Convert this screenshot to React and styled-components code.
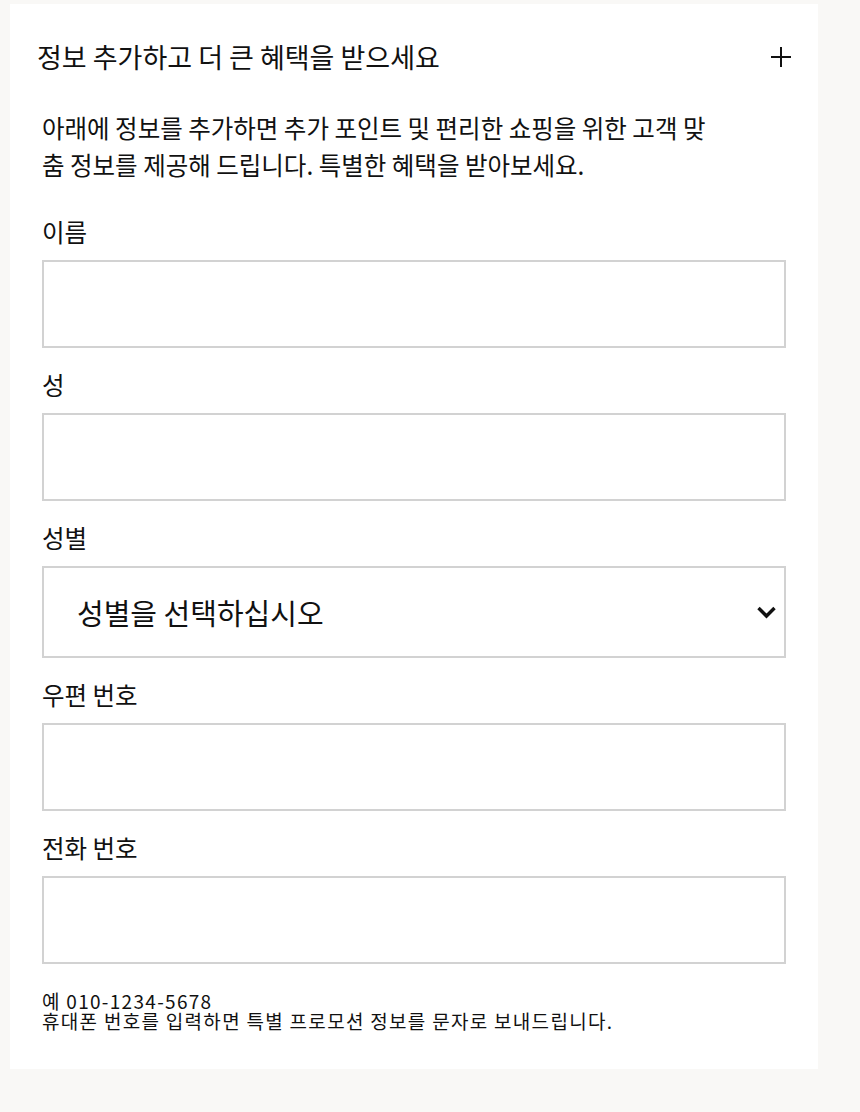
import React from "react";
import styled, { createGlobalStyle } from "styled-components";

const Global = createGlobalStyle`
  html, body { margin: 0; padding: 0; background: #f9f8f6; }
  body { font-family: "Noto Sans CJK KR", "Noto Sans", sans-serif; color: #111; }
  * { box-sizing: border-box; }
`;

const Page = styled.div`
  padding: 4px 42px 44px 10px;
`;

const Panel = styled.section`
  background: #fff;
  width: 808px;
  padding-bottom: 38px;
`;

const Header = styled.button`
  display: flex;
  align-items: center;
  justify-content: space-between;
  width: 100%;
  border: 0;
  background: transparent;
  padding: 38px 26px 0 27px;
  font: inherit;
  color: inherit;
  cursor: pointer;
  text-align: left;
`;

const Title = styled.span`
  font-size: 27px;
  line-height: 30px;
  font-weight: 400;
`;

const Body = styled.div`
  padding: 37px 32px 0 32px;
`;

const Intro = styled.p`
  margin: 0 0 35px;
  font-size: 24.5px;
  line-height: 37px;
`;

const Fields = styled.div`
  display: flex;
  flex-direction: column;
  gap: 23px;
`;

const Field = styled.label`
  display: flex;
  flex-direction: column;
  gap: 14px;
`;

const Label = styled.span`
  font-size: 24.5px;
  line-height: 28px;
`;

const Input = styled.input`
  display: block;
  width: 100%;
  height: 88px;
  border: 2px solid #d2d2d2;
  background: #fff;
  padding: 0 32px;
  font: inherit;
  font-size: 24px;
  outline: none;
`;

const SelectBox = styled.div`
  position: relative;
  height: 92px;
  border: 2px solid #d2d2d2;
  display: flex;
  align-items: center;
`;

const Select = styled.select`
  appearance: none;
  width: 100%;
  height: 100%;
  border: 0;
  background: transparent;
  padding: 0 60px 0 33px;
  font: inherit;
  font-size: 29px;
  color: #111;
  outline: none;
`;

const Chevron = styled.svg`
  position: absolute;
  right: 7px;
  top: 50%;
  transform: translateY(-50%);
  pointer-events: none;
`;

const Hint = styled.div`
  margin-top: 27px;
  display: flex;
  flex-direction: column;
`;

const HintLine = styled.span`
  display: block;
  font-size: 19px;
  line-height: 20px;
  letter-spacing: 1.3px;
`;

const PlusIcon = () => (
  <svg width="22" height="22" viewBox="0 0 22 22" aria-hidden="true">
    <path d="M11 1v20M1 11h20" stroke="#111" strokeWidth="2" fill="none" />
  </svg>
);

export default function App() {
  return (
    <>
      <Global />
      <Page>
        <Panel>
          <Header type="button">
            <Title>정보 추가하고 더 큰 혜택을 받으세요</Title>
            <PlusIcon />
          </Header>
          <Body>
            <Intro>
              아래에 정보를 추가하면 추가 포인트 및 편리한 쇼핑을 위한 고객 맞
              <br />
              춤 정보를 제공해 드립니다. 특별한 혜택을 받아보세요.
            </Intro>
            <Fields>
              <Field>
                <Label>이름</Label>
                <Input type="text" />
              </Field>
              <Field>
                <Label>성</Label>
                <Input type="text" />
              </Field>
              <Field>
                <Label>성별</Label>
                <SelectBox>
                  <Select defaultValue="">
                    <option value="">성별을 선택하십시오</option>
                    <option value="f">여성</option>
                    <option value="m">남성</option>
                  </Select>
                  <Chevron width="21" height="14" viewBox="0 0 21 14">
                    <path d="M2.5 3l8 8 8-8" stroke="#111" strokeWidth="3.4" fill="none" />
                  </Chevron>
                </SelectBox>
              </Field>
              <Field>
                <Label>우편 번호</Label>
                <Input type="text" />
              </Field>
              <Field>
                <Label>전화 번호</Label>
                <Input type="tel" />
              </Field>
            </Fields>
            <Hint>
              <HintLine>예 010-1234-5678</HintLine>
              <HintLine>휴대폰 번호를 입력하면 특별 프로모션 정보를 문자로 보내드립니다.</HintLine>
            </Hint>
          </Body>
        </Panel>
      </Page>
    </>
  );
}
